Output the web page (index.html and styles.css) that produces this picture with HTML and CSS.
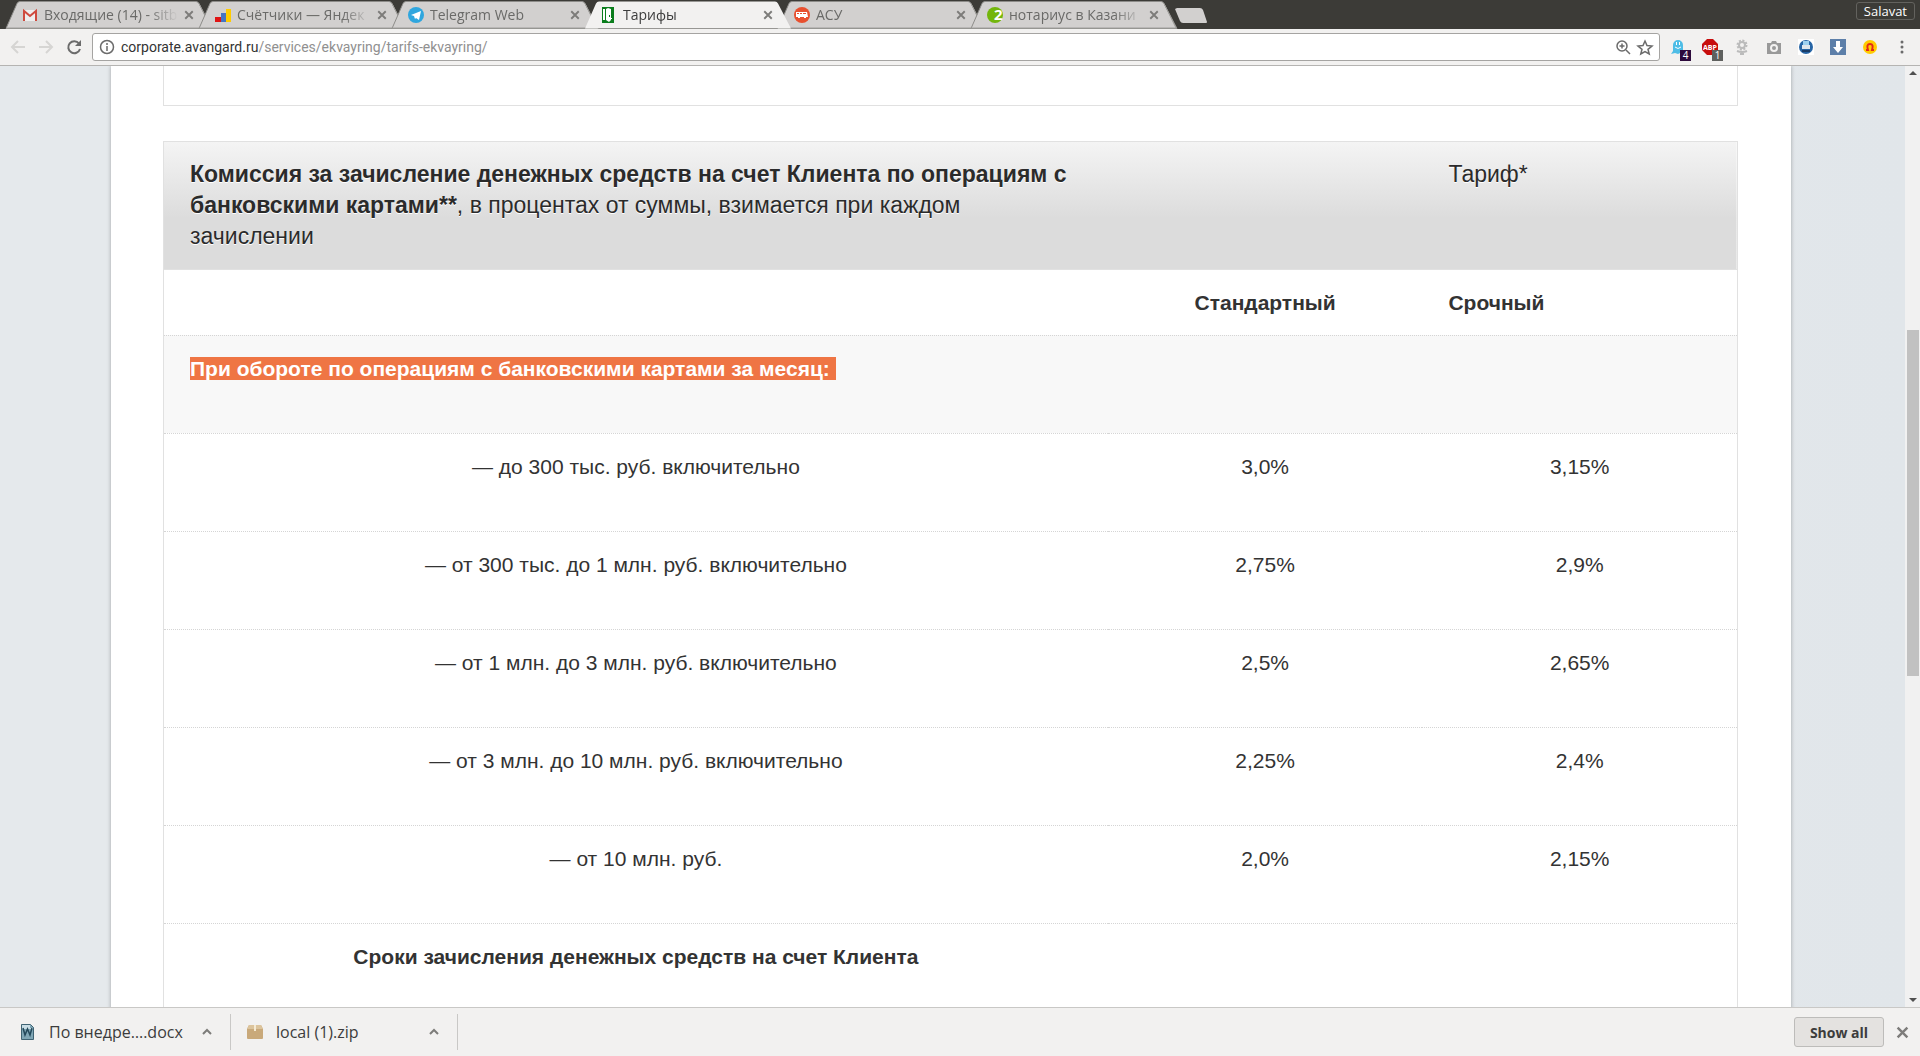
FILE: index.html
```html
<!DOCTYPE html>
<html lang="ru">
<head>
    <meta charset="UTF-8">
    <meta name="viewport" content="width=device-width, initial-scale=1.0">
    <title>Тарифы</title>
    <link rel="stylesheet" href="styles.css">
</head>
<body>
    <header class="tab-strip">
        <div class="tab">
            <svg class="tab-bg" viewBox="0 0 206 28" aria-hidden="true"><path d="M0 28L11 3Q12 1 14 1H190Q192 1 193 3L206 28Z"/><path class="edge" d="M0 27.5H205L193 3"/></svg>
            <svg class="icon" viewBox="0 0 16 16"><path fill="#eee" d="M1 3h14v11H1z"/><path fill="none" stroke="#cf4a3e" stroke-width="2" d="M2 14V4l6 5 6-5v10"/></svg>
            <span class="tab-title">Входящие (14) - sitb</span>
            <button class="close" aria-label="Закрыть"><svg viewBox="0 0 8 8"><path d="M1 1l6 6M7 1L1 7"/></svg></button>
        </div>
        <div class="tab">
            <svg class="tab-bg" viewBox="0 0 206 28" aria-hidden="true"><path d="M0 28L11 3Q12 1 14 1H190Q192 1 193 3L206 28Z"/><path class="edge" d="M0 27.5H205L193 3"/></svg>
            <svg class="icon" viewBox="0 0 16 16"><path fill="#e01414" d="M0 10h6v5H0z"/><path fill="#4674c4" d="M6 6h5v9H6z"/><path fill="#fc0" d="M11 2h5v13h-5z"/></svg>
            <span class="tab-title">Счётчики — Яндек</span>
            <button class="close" aria-label="Закрыть"><svg viewBox="0 0 8 8"><path d="M1 1l6 6M7 1L1 7"/></svg></button>
        </div>
        <div class="tab">
            <svg class="tab-bg" viewBox="0 0 206 28" aria-hidden="true"><path d="M0 28L11 3Q12 1 14 1H190Q192 1 193 3L206 28Z"/><path class="edge" d="M0 27.5H205L193 3"/></svg>
            <svg class="icon" viewBox="0 0 16 16"><circle cx="8" cy="8" r="8" fill="#2fa6de"/><path fill="#fff" d="M3 8l10-4-2 9-3-2-1 1-1-3z"/></svg>
            <span class="tab-title">Telegram Web</span>
            <button class="close" aria-label="Закрыть"><svg viewBox="0 0 8 8"><path d="M1 1l6 6M7 1L1 7"/></svg></button>
        </div>
        <div class="tab active">
            <svg class="tab-bg" viewBox="0 0 206 28" aria-hidden="true"><path d="M0 28L11 3Q12 1 14 1H190Q192 1 193 3L206 28Z"/></svg>
            <svg class="icon" viewBox="0 0 16 16"><path fill="#0a7d1c" d="M1 0h12v16H1z"/><path fill="#fff" d="M2 2h2v11H2zM5 2l2-1 3 1v9h1v1h-1v1l-2 2-3-2z"/><path fill="#0a7d1c" d="M8 8h1v2H8z"/></svg>
            <span class="tab-title">Тарифы</span>
            <button class="close" aria-label="Закрыть"><svg viewBox="0 0 8 8"><path d="M1 1l6 6M7 1L1 7"/></svg></button>
        </div>
        <div class="tab">
            <svg class="tab-bg" viewBox="0 0 206 28" aria-hidden="true"><path d="M0 28L11 3Q12 1 14 1H190Q192 1 193 3L206 28Z"/><path class="edge" d="M0 27.5H205L193 3"/></svg>
            <svg class="icon" viewBox="0 0 16 16"><circle cx="8" cy="8" r="8" fill="#e8502f"/><path fill="#fff" d="M2 5h11l1 5h-2v1h-2v-1H6v1H4v-1H2z"/><path fill="#e8502f" d="M3 6h2v1H3zM6 6h2v1H6zM9 6h3v1H9z"/></svg>
            <span class="tab-title">АСУ</span>
            <button class="close" aria-label="Закрыть"><svg viewBox="0 0 8 8"><path d="M1 1l6 6M7 1L1 7"/></svg></button>
        </div>
        <div class="tab">
            <svg class="tab-bg" viewBox="0 0 206 28" aria-hidden="true"><path d="M0 28L11 3Q12 1 14 1H190Q192 1 193 3L206 28Z"/><path class="edge" d="M0 27.5H205L193 3"/></svg>
            <svg class="icon" viewBox="0 0 16 16"><circle cx="8" cy="8" r="8" fill="#73b60c"/><text class="icon-two" x="7" y="13">2</text></svg>
            <span class="tab-title">нотариус в Казани</span>
            <button class="close" aria-label="Закрыть"><svg viewBox="0 0 8 8"><path d="M1 1l6 6M7 1L1 7"/></svg></button>
        </div>
        <button class="new-tab" aria-label="Новая вкладка"><svg viewBox="0 0 33 16"><path d="M2 0H25Q27 0 28 2L32 14Q32 15 31 15H8Q6 15 5 13L0 1Z"/></svg></button>
        <button class="profile">Salavat</button>
    </header>

    <nav class="toolbar">
        <button class="tool off" aria-label="Назад"><svg viewBox="0 0 16 16"><path d="M15 8H2M8 2L2 8l6 6"/></svg></button>
        <button class="tool off" aria-label="Вперед"><svg viewBox="0 0 16 16"><path d="M1 8h13M8 2l6 6-6 6"/></svg></button>
        <button class="tool" aria-label="Обновить"><svg viewBox="0 0 16 16"><path d="M13 4.500A6 6 0 1 0 14 10"/><path class="solid" d="M15 1v6H9z"/></svg></button>
        <div class="omnibox">
            <svg class="icon line" viewBox="0 0 16 16"><circle cx="8" cy="8" r="6.500"/><path d="M8 7v5M8 4v2"/></svg>
            <div class="url" role="textbox" aria-label="Адрес">corporate.avangard.ru<span>/services/ekvayring/tarifs-ekvayring/</span></div>
            <svg class="icon line" viewBox="0 0 16 16"><circle cx="7" cy="7" r="5"/><path d="M11 11l4 4M4.500 7h5M7 4.500v5"/></svg>
            <svg class="icon line" viewBox="0 0 16 16"><path d="M8 2l2 4.500 5 .5-4 3.300 1.200 4.700L8 12.500 3.800 15 5 10.300 1 7l5-.5z"/></svg>
        </div>
        <div class="extensions">
            <button class="ext" aria-label="Ghostery"><svg viewBox="0 0 16 16"><path fill="#4fbde6" d="M3 6a5 5 0 0 1 10 0v6l2 2-3 1-2-1-2 1-3-1-4 1 2-3z"/><path fill="#fff" d="M6 3h1v3H6zM9 3h1v3H9z"/><path fill="none" stroke="#fff" d="M5 8q3 3 6 0"/></svg><span class="badge violet">4</span></button>
            <button class="ext" aria-label="Adblock Plus"><svg viewBox="0 0 16 16"><path fill="#c70d0d" d="M5 0h6l5 5v6l-5 5H5l-5-5V5z"/><text class="icon-abp" x="8" y="11">ABP</text></svg><span class="badge">1</span></button>
            <button class="ext" aria-label="Расширение"><svg viewBox="0 0 16 16"><circle cx="8" cy="6" r="3" fill="none" stroke="#bbb" stroke-width="2"/><circle cx="8" cy="6" r="4.500" fill="none" stroke="#bbb" stroke-width="2" stroke-dasharray="2 1.500"/><path fill="none" stroke="#bbb" stroke-width="2" d="M3 12q5 2 10 0M6 15h4"/></svg></button>
            <button class="ext" aria-label="Снимок экрана"><svg viewBox="0 0 16 16"><path fill="#999" d="M1 4h4l1-2h4l1 2h4v11H1z"/><circle cx="8" cy="9" r="3" fill="#999" stroke="#f2f1f0" stroke-width="2"/></svg></button>
            <button class="ext" aria-label="Печать"><svg viewBox="0 0 16 16"><path fill="#fff" d="M0 0h16v16H0z"/><circle cx="8" cy="8" r="7" fill="#2765a5"/><path fill="#9ed1f0" d="M5 2h6v4H5z"/><path fill="#dfe6ec" d="M4 6h8v4H4z"/><path fill="#183b66" d="M4 11h8v2H4z"/></svg></button>
            <button class="ext" aria-label="Загрузки"><svg viewBox="0 0 16 16"><path fill="#5d7fa9" d="M0 0h16v16H0z"/><path fill="#fff" d="M6 2h4v6h3l-5 6-5-6h3z"/></svg></button>
            <button class="ext" aria-label="Подкова"><svg viewBox="0 0 16 16"><circle cx="8" cy="8" r="7" fill="#fc0"/><path fill="none" stroke="#e3291b" stroke-width="2" d="M4 11h2Q4 5 8 5t2 6h2"/></svg></button>
            <button class="ext" aria-label="Меню"><svg viewBox="0 0 16 16"><g fill="#6b6b6b"><circle cx="8" cy="3" r="1.500"/><circle cx="8" cy="8" r="1.500"/><circle cx="8" cy="13" r="1.500"/></g></svg></button>
        </div>
    </nav>

    <div class="viewport">
        <main class="site">
            <div class="sheet">
                <div class="prev-table"></div>
                <table class="tariffs">
                    <colgroup>
                        <col class="col-name">
                        <col class="col-rate">
                        <col class="col-rate">
                    </colgroup>
                    <thead>
                        <tr>
                            <th><strong>Комиссия за зачисление денежных средств на счет Клиента по операциям с банковскими картами**</strong>, в процентах от суммы, взимается при каждом зачислении</th>
                            <th></th>
                            <th>Тариф*</th>
                        </tr>
                    </thead>
                    <tbody>
                        <tr class="short">
                            <td></td>
                            <td><strong>Стандартный</strong></td>
                            <td class="left"><strong>Срочный</strong></td>
                        </tr>
                        <tr class="odd">
                            <td class="left" colspan="3"><mark>При обороте по операциям с банковскими картами за месяц:&nbsp;</mark></td>
                        </tr>
                        <tr>
                            <td>— до 300 тыс. руб. включительно</td>
                            <td>3,0%</td>
                            <td>3,15%</td>
                        </tr>
                        <tr>
                            <td>— от 300 тыс. до 1 млн. руб. включительно</td>
                            <td>2,75%</td>
                            <td>2,9%</td>
                        </tr>
                        <tr>
                            <td>— от 1 млн. до 3 млн. руб. включительно</td>
                            <td>2,5%</td>
                            <td>2,65%</td>
                        </tr>
                        <tr>
                            <td>— от 3 млн. до 10 млн. руб. включительно</td>
                            <td>2,25%</td>
                            <td>2,4%</td>
                        </tr>
                        <tr>
                            <td>— от 10 млн. руб.</td>
                            <td>2,0%</td>
                            <td>2,15%</td>
                        </tr>
                        <tr>
                            <td><strong>Сроки зачисления денежных средств на счет Клиента</strong></td>
                            <td></td>
                            <td></td>
                        </tr>
                    </tbody>
                </table>
            </div>
        </main>
        <div class="scrollbar" aria-hidden="true">
            <svg viewBox="0 0 15 15"><path d="M4 9l4-4 4 4z"/></svg>
            <div class="track"><div class="thumb"></div></div>
            <svg viewBox="0 0 15 15"><path d="M4 6l4 4 4-4z"/></svg>
        </div>
    </div>

    <footer class="downloads">
        <div class="download">
            <svg class="icon" viewBox="0 0 16 16"><path fill="#7fa6b5" stroke="#3f6373" d="M1.500.5h9l3 3v12h-12z"/><path fill="#c9dde5" d="M2 1h8v3h3v1H2z"/><path fill="none" stroke="#23485a" stroke-width="1.500" d="M3 4l2 7 2.500-6L10 11l2-7"/></svg>
            <a href="#">По внедре….docx</a>
            <button class="more" aria-label="Меню"><svg viewBox="0 0 10 6"><path d="M1 5l4-4 4 4"/></svg></button>
        </div>
        <div class="download zip">
            <svg class="icon" viewBox="0 0 16 16"><path fill="#c9a97a" d="M2 1h12l2 4v9q0 1-1 1H1q-1 0-1-1V5z"/><path fill="#dcc49c" d="M2 1h12l2 4H0z"/><path fill="#f5ead2" d="M7 1h2v6H7z"/></svg>
            <a href="#">local (1).zip</a>
            <button class="more" aria-label="Меню"><svg viewBox="0 0 10 6"><path d="M1 5l4-4 4 4"/></svg></button>
        </div>
        <button class="show-all">Show all</button>
        <button class="close big" aria-label="Закрыть"><svg viewBox="0 0 8 8"><path d="M1 1l6 6M7 1L1 7"/></svg></button>
    </footer>
</body>
</html>
```
FILE: styles.css
```css
* {
    box-sizing: border-box;
}

body {
    margin: 0;
    height: 100vh;
    display: flex;
    flex-direction: column;
    overflow: hidden;
    font-family: "Open Sans", "Noto Sans", sans-serif;
    font-size: 14px;
    color: #3c3c3c;
    background-color: #f2f1f0;
}

button {
    padding: 0;
    border: none;
    background: none;
    font: inherit;
    color: inherit;
}

svg {
    display: block;
    overflow: visible;
}

.icon {
    flex: none;
    width: 16px;
    height: 16px;
}

/* Tabs */
.tab-strip {
    flex: none;
    display: flex;
    align-items: flex-start;
    height: 29px;
    padding: 0 5px 0 6px;
    background-color: #3c3b37;
}

.tab {
    position: relative;
    display: flex;
    align-items: center;
    width: 193px;
    height: 29px;
    padding: 0 1px 0 16px;
    color: #6a6a68;
}

.tab-bg {
    position: absolute;
    left: 0;
    top: 0;
    width: 206px;
    height: 29px;
    fill: #d2d0cf;
    stroke: #8d8c89;
    stroke-width: 1;
}

.tab-bg .edge {
    fill: none;
    stroke: #a09f9c;
}

.tab .icon,
.tab-title,
.tab .close {
    position: relative;
}

.tab.active {
    z-index: 1;
    color: #3c3c3c;
}

.tab.active .tab-bg {
    fill: #f2f1f0;
    stroke: none;
}

.tab-title {
    flex: 1;
    margin-left: 6px;
    overflow: hidden;
    white-space: nowrap;
    mask-image: linear-gradient(to right, #000 105px, transparent 134px);
}

.close {
    flex: none;
    width: 18px;
    height: 18px;
    display: flex;
    align-items: center;
    justify-content: center;
}

.close svg {
    width: 10px;
    height: 10px;
    fill: none;
    stroke: #7d7c7a;
    stroke-width: 1.5;
}

.icon-two {
    font: bold 15px "Open Sans", sans-serif;
    fill: #fff;
}

.new-tab {
    width: 33px;
    height: 16px;
    margin: 8px 0 0 11px;
}

.new-tab svg {
    width: 33px;
    height: 16px;
    fill: #d2d0cf;
}

.profile {
    height: 18px;
    margin: 2px 0 0 auto;
    padding: 0 7px;
    border: 1px solid #63625e;
    border-radius: 3px;
    font-size: 13px;
    line-height: 16px;
    color: #fff;
}

/* Address bar */
.toolbar {
    flex: none;
    display: flex;
    align-items: center;
    height: 37px;
    padding: 0 10px;
    border-bottom: 1px solid #b5b4b2;
    background-color: #f2f1f0;
}

.tool {
    width: 16px;
    height: 16px;
}

.tool + .tool {
    margin-left: 12px;
}

.tool svg {
    width: 16px;
    height: 16px;
    fill: none;
    stroke: #6b6b6b;
    stroke-width: 2;
}

.tool .solid {
    fill: #6b6b6b;
    stroke: none;
}

.tool.off svg {
    stroke: #d6d5d3;
}

.omnibox {
    flex: 1;
    display: flex;
    align-items: center;
    gap: 6px;
    height: 28px;
    margin: 0 10px;
    padding: 0 6px;
    border: 1px solid #a5a4a2;
    border-radius: 3px;
    background-color: #fff;
}

.line {
    fill: none;
    stroke: #6b6b6b;
    stroke-width: 1.5;
}

.url {
    flex: 1;
    white-space: nowrap;
    font-family: Roboto, sans-serif;
    font-size: 14px;
    color: #333;
}

.url span {
    color: #909090;
}

.extensions {
    display: flex;
    gap: 16px;
}

.ext {
    position: relative;
    width: 16px;
    height: 16px;
}

.ext svg {
    width: 16px;
    height: 16px;
}

.icon-abp {
    font: bold 7px "Open Sans", sans-serif;
    fill: #fff;
    text-anchor: middle;
}

.badge {
    position: absolute;
    left: 10px;
    top: 11px;
    width: 11px;
    height: 11px;
    background-color: #5e605e;
    font-size: 10px;
    line-height: 11px;
    color: #fff;
}

.badge.violet {
    background-color: #2d0a3c;
}

/* Site page */
.viewport {
    flex: 1;
    min-height: 0;
    display: flex;
}

.site {
    flex: 1;
    overflow: hidden;
    padding: 0 114px 0 111px;
    background: linear-gradient(to right, #e5e9ec 60%, #e1e6ea);
}

.sheet {
    min-height: 100%;
    padding: 0 53px 0 52px;
    background-color: #fff;
    box-shadow: 0 0 4px rgba(0, 0, 0, 0.3);
}

.prev-table {
    height: 40px;
    border: 1px solid #e1e1e1;
    border-top: none;
}

.tariffs {
    width: 100%;
    margin-top: 35px;
    table-layout: fixed;
    border: 1px solid #e1e1e1;
    border-collapse: separate;
    border-spacing: 0;
    font-family: "Liberation Sans", Arial, sans-serif;
    font-size: 21px;
    line-height: 31px;
    color: #333;
}

.col-name {
    width: 60%;
}

.col-rate {
    width: 20%;
}

.tariffs thead {
    background: linear-gradient(#f4f4f4, #dcdcdc 60%);
}

.tariffs th {
    padding: 17px 26px;
    text-align: left;
    vertical-align: top;
    font-size: 23px;
    font-weight: normal;
    color: #2b2b2b;
    text-shadow: 0 1px 0 #fff;
}

.tariffs td {
    height: 98px;
    padding: 17px 26px;
    border-top: 1px dotted #d5d5d5;
    text-align: center;
    vertical-align: top;
}

.tariffs .short td {
    height: 66px;
    border-top: 1px solid #e1e1e1;
}

.tariffs .odd td {
    background-color: #f8f8f8;
}

.tariffs .left {
    text-align: left;
}

.tariffs mark {
    background-color: #ef7544;
    color: #fff;
    font-weight: bold;
}

.scrollbar {
    flex: none;
    display: flex;
    flex-direction: column;
    width: 15px;
    background-color: #f1f1f1;
}

.scrollbar svg {
    width: 15px;
    height: 15px;
    fill: #505050;
}

.track {
    flex: 1;
    display: flex;
    flex-direction: column;
    padding: 0 1px 0 2px;
}

.track::before {
    content: "";
    flex: 249;
}

.track::after {
    content: "";
    flex: 316;
}

.thumb {
    flex: 346;
    background-color: #c1c1c1;
}

/* Downloads */
.downloads {
    flex: none;
    display: flex;
    align-items: center;
    height: 49px;
    padding-right: 9px;
    border-top: 1px solid #c9c8c6;
    background-color: #f2f1f0;
    font-size: 16px;
}

.download {
    display: flex;
    align-items: center;
    width: 231px;
    height: 36px;
    padding: 0 18px 0 20px;
    border-right: 1px solid #c9c8c6;
}

.download.zip {
    width: 227px;
    padding-left: 16px;
}

.download a {
    flex: 1;
    margin-left: 13px;
    white-space: nowrap;
    text-decoration: none;
    color: #3c3c3c;
}

.more svg {
    width: 10px;
    height: 6px;
    fill: none;
    stroke: #7d7c7a;
    stroke-width: 2;
}

.show-all {
    width: 90px;
    height: 30px;
    margin-left: auto;
    border: 1px solid #bdbcba;
    border-radius: 3px;
    background-color: #e4e2e0;
    font-size: 14px;
    font-weight: bold;
}

.close.big {
    margin-left: 9px;
}

.close.big svg {
    width: 13px;
    height: 13px;
}
```
